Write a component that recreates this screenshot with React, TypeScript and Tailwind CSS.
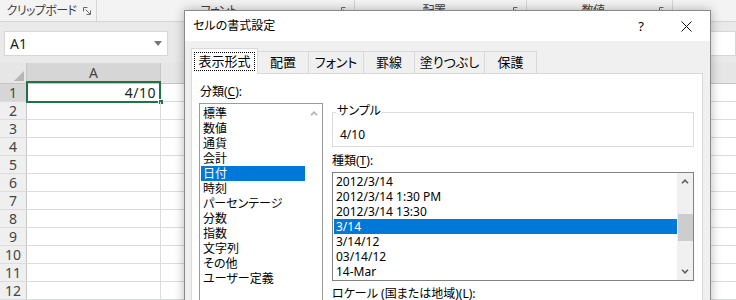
import React from 'react';

const ribbonGroups = [
  { label: 'クリップボード', width: 'w-[97px]' },
  { label: 'フォント', width: 'w-[258px]' },
  { label: '配置', width: 'w-[172px]' },
  { label: '数値', width: 'w-[146px]' },
];

const tabs = [
  { label: '配置', width: 'w-[51px]' },
  { label: 'フォント', width: 'w-[55px]' },
  { label: '罫線', width: 'w-[51px]' },
  { label: '塗りつぶし', width: 'w-[70px]' },
  { label: '保護', width: 'w-[52px]' },
];

const categories = [
  '標準',
  '数値',
  '通貨',
  '会計',
  '日付',
  '時刻',
  'パーセンテージ',
  '分数',
  '指数',
  '文字列',
  'その他',
  'ユーザー定義',
];

const dateTypes = [
  '2012/3/14',
  '2012/3/14 1:30 PM',
  '2012/3/14 13:30',
  '3/14',
  '3/14/12',
  '03/14/12',
  '14-Mar',
];

const rows = Array.from({ length: 12 }, (_, i) => i + 1);

function Launcher() {
  return (
    <svg width="8" height="8" viewBox="0 0 8 8" className="text-[#6a6a6a]">
      <path d="M0.5 4.5V0.5H4.5" fill="none" stroke="currentColor" />
      <path d="M2.5 2.5L7 7" fill="none" stroke="currentColor" />
      <path d="M7.5 3.5V7.5H3.5" fill="none" stroke="currentColor" />
    </svg>
  );
}

function Chevron({ up, color }: { up: boolean; color: string }) {
  return (
    <svg width="8" height="5" viewBox="0 0 8 5">
      <path
        d={up ? 'M1 4.2L4 1.2L7 4.2' : 'M1 0.8L4 3.8L7 0.8'}
        fill="none"
        stroke={color}
        strokeWidth="1.6"
      />
    </svg>
  );
}

function Underlined({ before, letter, after }: { before: string; letter: string; after: string }) {
  return (
    <span>
      {before}
      <span className="underline underline-offset-2">{letter}</span>
      {after}
    </span>
  );
}

export default function App() {
  return (
    <div className="relative h-[300px] w-[736px] overflow-hidden bg-white font-['Noto_Sans','Noto_Sans_CJK_JP',sans-serif] text-black [font-feature-settings:'palt']">
      {/* ribbon group labels */}
      <div className="flex h-[22px] border-b border-[#d5d5d5] bg-[#f3f3f3]">
        {ribbonGroups.map((g) => (
          <div key={g.label} className={`flex ${g.width} items-center border-r border-[#d5d5d5] pr-[5px]`}>
            <span className="flex-1 text-center text-[12px] leading-[16px] tracking-[-0.6px] text-[#444]">
              {g.label}
            </span>
            <Launcher />
          </div>
        ))}
        <div className="flex-1" />
      </div>

      {/* name box + formula bar */}
      <div className="flex h-[41px] items-start bg-[#e9e9e9] pt-[9px]">
        <div className="ml-[4px] flex h-[25px] w-[164px] items-center border border-[#d6d6d6] bg-white pl-[5px] pr-[5px]">
          <span className="text-[14px] leading-[18px] text-[#222]">A1</span>
          <svg width="8" height="5" viewBox="0 0 8 5" className="ml-auto">
            <path d="M0 0H8L4 5Z" fill="#777" />
          </svg>
        </div>
        <div className="ml-[20px] h-[25px] flex-1 border border-[#d6d6d6] bg-white" />
      </div>

      {/* column headers */}
      <div className="flex h-[21px] border-b border-[#c6c6c6] bg-[#e6e6e6]">
        <div className="flex w-[27px] items-end justify-end border-r border-[#c6c6c6] p-[2px]">
          <svg width="10" height="10" viewBox="0 0 10 10">
            <path d="M10 0V10H0Z" fill="#b7b7b7" />
          </svg>
        </div>
        <div className="flex w-[134px] items-center justify-center border-r border-[#c6c6c6] bg-[#d6d6d6] text-[14px] leading-[18px] text-[#444]">
          A
        </div>
        <div className="flex-1" />
      </div>

      {/* grid rows */}
      {rows.map((r) => (
        <div key={r} className="flex h-[18px] border-b border-[#dadcdd]">
          <div
            className={`flex w-[27px] items-center justify-center border-r border-[#c6c6c6] text-[14px] leading-[17px] text-[#444] ${
              r === 1 ? 'bg-[#d6d6d6]' : 'bg-[#efefef]'
            }`}
          >
            {r}
          </div>
          <div className="relative flex w-[134px] items-center justify-end border-r border-[#dadcdd] pr-[4px]">
            {r === 1 && (
              <>
                <span className="text-[14px] leading-[17px] tracking-[0.5px] text-[#222]">4/10</span>
                <div className="absolute -left-px -top-[3px] bottom-[-2px] -right-px border-2 border-[#217346]" />
                <div className="absolute -bottom-[4px] -right-[4px] h-[6px] w-[6px] border border-white bg-[#217346]" />
              </>
            )}
          </div>
          <div className="flex-1" />
        </div>
      ))}

      {/* format cells dialog */}
      <div className="absolute left-[184px] top-[10px] h-[300px] w-[527px] border border-[#8a8a8a] bg-[#f0f0f0] shadow-[0_0_10px_rgba(0,0,0,0.28)]">
        <div className="flex h-[30px] items-center bg-white pl-[8px]">
          <span className="text-[12px] leading-[16px]">セルの書式設定</span>
          <span className="ml-auto text-[13px] leading-[16px]">?</span>
          <svg width="11" height="11" viewBox="0 0 11 11" className="ml-[37px] mr-[18px]">
            <path d="M0.5 0.5L10.5 10.5M10.5 0.5L0.5 10.5" stroke="#111" strokeWidth="1" />
          </svg>
        </div>

        <div className="pl-[6px] pr-[7px] pt-[7px]">
          {/* tabs */}
          <div className="flex h-[25px] items-start">
            <div className="relative z-10 flex h-[26px] w-[67px] items-center justify-center border-x border-t border-[#d9d9d9] bg-white">
              <span className="border border-dotted border-black px-[3px] text-[13px] leading-[17px]">表示形式</span>
            </div>
            {tabs.map((t) => (
              <div
                key={t.label}
                className={`mt-[3px] flex h-[22px] ${t.width} items-center justify-center border-r border-t border-[#d9d9d9] text-[13px] leading-[17px]`}
              >
                {t.label}
              </div>
            ))}
          </div>

          {/* tab panel */}
          <div className="flex h-[240px] border border-[#d9d9d9] bg-white">
            <div className="flex w-[131px] flex-col pl-[7px] pt-[10px]">
              <div className="pl-[1px] text-[12px] leading-[16px]">
                <Underlined before="分類(" letter="C" after="):" />
              </div>
              <div className="mt-[3px] flex flex-1 border border-[#9a9a9a]">
                <div className="flex-1 pl-[1px] pt-[2px]">
                  {categories.map((c) => (
                    <div
                      key={c}
                      className={`h-[15px] pl-[2px] text-[12px] leading-[15px] ${
                        c === '日付' ? 'bg-[#0078d7] text-white' : ''
                      }`}
                    >
                      {c}
                    </div>
                  ))}
                </div>
                <div className="flex w-[17px] justify-center pt-[7px]">
                  <Chevron up color="#b0b0b0" />
                </div>
              </div>
            </div>

            <div className="ml-[9px] flex w-[362px] flex-col pt-[38px]">
              <div className="relative h-[35px] border border-[#dcdcdc] pl-[7px] pt-[8px]">
                <span className="absolute -top-[10px] left-[3px] bg-white px-px text-[12px] leading-[16px]">サンプル</span>
                <span className="text-[12px] leading-[16px]">4/10</span>
              </div>
              <div className="mt-[6px] text-[12px] leading-[16px]">
                <Underlined before="種類(" letter="T" after="):" />
              </div>
              <div className="mt-[3px] flex h-[109px] border border-[#828282]">
                <div className="flex-1 pl-[1px] pt-px">
                  {dateTypes.map((d) => (
                    <div
                      key={d}
                      className={`h-[15px] pl-[2px] text-[12px] leading-[15px] ${
                        d === '3/14' ? 'bg-[#0078d7] text-white' : ''
                      }`}
                    >
                      {d}
                    </div>
                  ))}
                </div>
                <div className="flex w-[16px] flex-col items-center bg-[#f0f0f0]">
                  <div className="flex h-[17px] items-center">
                    <Chevron up color="#606060" />
                  </div>
                  <div className="h-[24px]" />
                  <div className="h-[27px] w-[15px] bg-[#cdcdcd]" />
                  <div className="flex-1" />
                  <div className="flex h-[17px] items-center">
                    <Chevron up={false} color="#606060" />
                  </div>
                </div>
              </div>
              <div className="mt-[5px] text-[12px] leading-[16px]">
                <Underlined before="ロケール (国または地域)(" letter="L" after="):" />
              </div>
            </div>
          </div>
        </div>
      </div>
    </div>
  );
}
